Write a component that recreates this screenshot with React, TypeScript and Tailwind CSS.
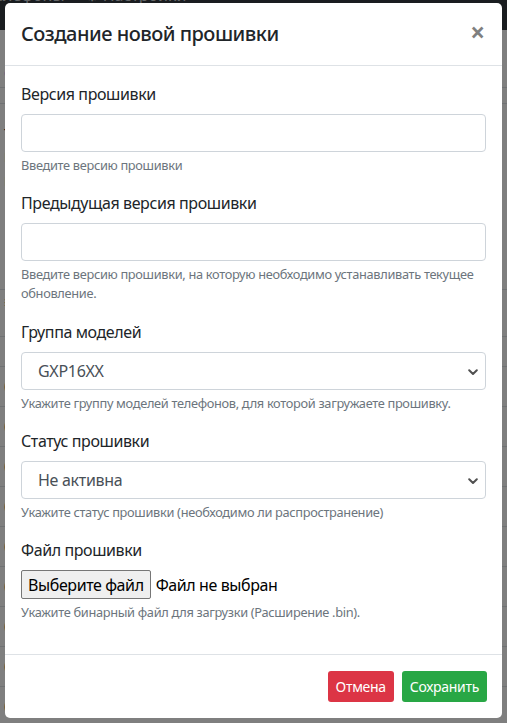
import { useState } from "react";

const rows = [365, 405, 445, 485, 525, 565, 605, 645, 685];

const Field = ({ label, children, hint }: { label: string; children: React.ReactNode; hint: React.ReactNode }) => (
  <div className="mb-4">
    <label className="block mb-2 text-[16px] leading-6 tracking-[-0.4px] text-[#212529]">{label}</label>
    {children}
    <small className="block mt-1 text-[12.8px] leading-[19.2px] tracking-[-0.32px] text-[#6c757d]">{hint}</small>
  </div>
);

const Chevron = () => (
  <svg width="10" height="7" viewBox="0 0 10 7" className="absolute right-[7px] top-[16px]">
    <path d="M1.2 1.3 L5 5 L8.8 1.3" fill="none" stroke="#505050" strokeWidth="2" strokeLinecap="round" strokeLinejoin="round" />
  </svg>
);

const SelectBox = ({ value }: { value: string }) => (
  <div className="relative h-[38px] w-full rounded-[4px] border border-[#ced4da] bg-white">
    <span className="absolute left-[16px] top-[6px] text-[16px] leading-6 tracking-[-0.3px] text-[#495057]">{value}</span>
    <Chevron />
  </div>
);

const App = () => {
  const [version, setVersion] = useState("");
  const [prev, setPrev] = useState("");

  return (
    <div className="relative h-[723px] w-[507px] overflow-hidden bg-white font-['Noto_Sans','Open_Sans',sans-serif]">
      {/* page behind the modal */}
      <div className="flex h-[30px] items-start gap-5 bg-[#343a40] px-0 text-[16px] leading-6 text-[#c8ccd0]">
        <span className="-mt-[17px] -ml-[14px]">Телефоны</span>
        <span className="-mt-[17px]">⚙ Настройки</span>
      </div>
      <div className="flex flex-col">
        <div className="h-[58px] border-b border-[#dee2e6] px-1 pt-[30px] text-[#007bff]">е</div>
        <div className="h-[16px] border-b border-[#dee2e6]" />
        <div className="h-[186px] border-b border-[#dee2e6] px-1 pt-4 text-[#212529]">
          <div>т</div>
          <div>п</div>
          <div>н</div>
        </div>
        <div className="h-[47px] border-b border-[#dee2e6] px-1 text-[#212529]">≡</div>
        <div className="h-[30px] border-b border-[#dee2e6]" />
        {rows.map((r) => (
          <div key={r} className="h-[40px] border-b border-[#dee2e6] px-1 pt-2 text-[#212529]">
            0
          </div>
        ))}
      </div>

      {/* backdrop */}
      <div className="absolute inset-0 bg-black/50" />

      {/* modal */}
      <div className="absolute left-[5px] top-[3px] w-[497px] rounded-[5px] bg-white text-[#212529]">
        <div className="flex items-start justify-between border-b border-[#dee2e6] p-4">
          <h5 className="text-[20px] font-medium leading-[30px] tracking-[-0.5px]">Создание новой прошивки</h5>
          <button className="mr-[1px] mt-[-2px] text-[26px] font-bold leading-[30px] text-black/50">×</button>
        </div>

        <div className="p-4 pb-4">
          <Field label="Версия прошивки" hint="Введите версию прошивки">
            <input
              value={version}
              onChange={(e) => setVersion(e.target.value)}
              className="block h-[38px] w-full rounded-[4px] border border-[#ced4da] px-3 text-[16px] text-[#495057] outline-none"
            />
          </Field>
          <Field
            label="Предыдущая версия прошивки"
            hint="Введите версию прошивки, на которую необходимо устанавливать текущее обновление."
          >
            <input
              value={prev}
              onChange={(e) => setPrev(e.target.value)}
              className="block h-[38px] w-full rounded-[4px] border border-[#ced4da] px-3 text-[16px] text-[#495057] outline-none"
            />
          </Field>
          <Field label="Группа моделей" hint="Укажите группу моделей телефонов, для которой загружаете прошивку.">
            <SelectBox value="GXP16XX" />
          </Field>
          <Field label="Статус прошивки" hint="Укажите статус прошивки (необходимо ли распространение)">
            <SelectBox value="Не активна" />
          </Field>
          <Field label="Файл прошивки" hint="Укажите бинарный файл для загрузки (Расширение .bin).">
            <div className="flex items-center gap-[5px] text-[16px] leading-6 tracking-[-0.4px]">
              <button className="h-[29px] rounded-[2px] border border-[#767676] bg-[#efefef] px-[6px] text-black">
                Выберите файл
              </button>
              <span className="text-black">Файл не выбран</span>
            </div>
          </Field>
        </div>

        <div className="flex justify-end gap-2 border-t border-[#dee2e6] px-[15px] py-4">
          <button className="h-[31px] rounded-[3px] bg-[#dc3545] px-2 text-[14px] tracking-[-0.3px] text-white">Отмена</button>
          <button className="h-[31px] rounded-[3px] bg-[#28a745] px-2 text-[14px] tracking-[-0.3px] text-white">Сохранить</button>
        </div>
      </div>
    </div>
  );
};

export default App;
